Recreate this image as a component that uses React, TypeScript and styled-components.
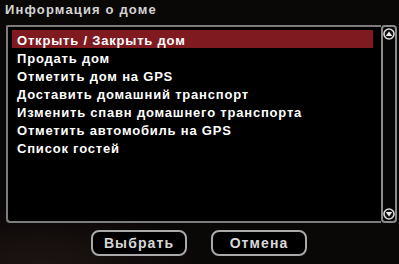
import React from "react";
import styled, { createGlobalStyle } from "styled-components";

const Global = createGlobalStyle`
  html, body { margin: 0; padding: 0; background: #0a0707; }
  #root { width: 399px; height: 264px; }
`;

const Window = styled.div`
  width: 399px;
  height: 264px;
  box-sizing: border-box;
  background: radial-gradient(ellipse 160px 60px at 40px 264px, #1c1412 0%, rgba(10,7,7,0) 100%), #0a0707;
  font-family: "Liberation Sans", Arial, sans-serif;
  font-weight: bold;
  display: flex;
  flex-direction: column;
`;

const Title = styled.div`
  height: 25px;
  padding-left: 5px;
  box-sizing: border-box;
  color: #d4d4d4;
  font-size: 13px;
  letter-spacing: 1.15px;
  line-height: 19px;
`;

const ListArea = styled.div`
  display: flex;
  margin-left: 6px;
  width: 391px;
  height: 198px;
`;

const ListBox = styled.div`
  flex: 1;
  box-sizing: border-box;
  border: 2px solid #7c7c7c;
  border-right-width: 0;
  border-radius: 2px 0 0 4px;
  background: #000;
  padding: 3px 8px 0 4px;
  display: flex;
  flex-direction: column;
`;

const Item = styled.div<{ $active?: boolean }>`
  height: 18px;
  box-sizing: border-box;
  padding: 3px 0 0 5px;
  line-height: 15px;
  font-size: 13px;
  letter-spacing: 0.8px;
  color: #fff;
  white-space: nowrap;
  background: ${(p) => (p.$active ? "#7f1a20" : "transparent")};
`;

const Scrollbar = styled.div`
  width: 16px;
  box-sizing: border-box;
  border: 2px solid #8a8a8a;
  border-radius: 4px;
  background: #050505;
  display: flex;
  flex-direction: column;
  justify-content: space-between;
  align-items: center;
  padding: 1px 0;
`;

const ButtonRow = styled.div`
  display: flex;
  justify-content: center;
  gap: 24px;
  margin-top: 7px;
  padding-right: 1px;
`;

const Button = styled.button`
  width: 96px;
  height: 26px;
  box-sizing: border-box;
  border: 2px solid #a9a9a9;
  border-radius: 8px;
  background: #000;
  color: #d8d8d8;
  font-family: "Liberation Sans", Arial, sans-serif;
  font-weight: bold;
  font-size: 14px;
  letter-spacing: 1.1px;
  padding: 0;
  line-height: 22px;
`;

const Arrow = ({ down }: { down?: boolean }) => (
  <svg width="12" height="12" viewBox="0 0 12 12">
    <circle cx="6" cy="6" r="5" fill="#111" stroke="#d8d8d8" strokeWidth="1.6" />
    {down ? (
      <polygon points="2.8,4 9.2,4 6,8.6" fill="#eee" />
    ) : (
      <polygon points="2.8,8 9.2,8 6,3.4" fill="#eee" />
    )}
  </svg>
);

const items = [
  "Открыть / Закрыть дом",
  "Продать дом",
  "Отметить дом на GPS",
  "Доставить домашний транспорт",
  "Изменить спавн домашнего транспорта",
  "Отметить автомобиль на GPS",
  "Список гостей",
];

export default function App() {
  return (
    <Window>
      <Global />
      <Title>Информация о доме</Title>
      <ListArea>
        <ListBox>
          {items.map((t, i) => (
            <Item key={t} $active={i === 0}>
              {t}
            </Item>
          ))}
        </ListBox>
        <Scrollbar>
          <Arrow />
          <Arrow down />
        </Scrollbar>
      </ListArea>
      <ButtonRow>
        <Button>Выбрать</Button>
        <Button>Отмена</Button>
      </ButtonRow>
    </Window>
  );
}
